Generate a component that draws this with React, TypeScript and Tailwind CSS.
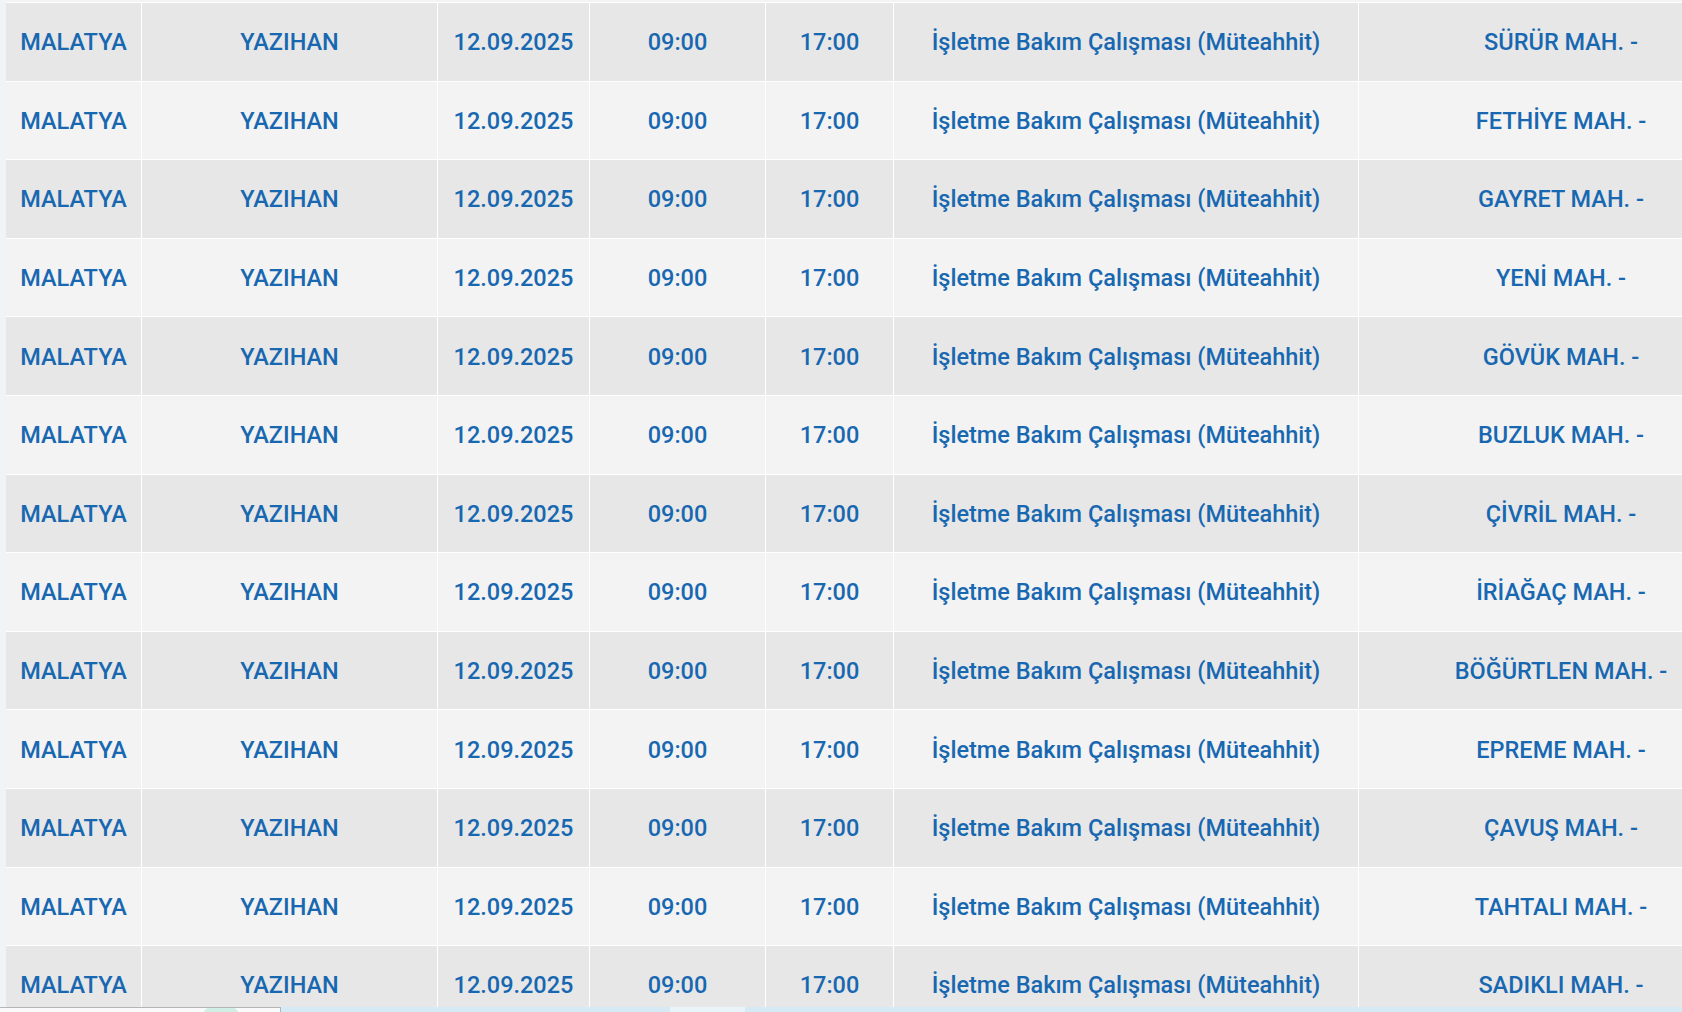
import React from "react";

const names = [
  "SÜRÜR MAH. -",
  "FETHİYE MAH. -",
  "GAYRET MAH. -",
  "YENİ MAH. -",
  "GÖVÜK MAH. -",
  "BUZLUK MAH. -",
  "ÇİVRİL MAH. -",
  "İRİAĞAÇ MAH. -",
  "BÖĞÜRTLEN MAH. -",
  "EPREME MAH. -",
  "ÇAVUŞ MAH. -",
  "TAHTALI MAH. -",
  "SADIKLI MAH. -",
];

function Row({ name, dark }: { name: string; dark: boolean }) {
  const bg = dark ? "bg-[#e7e7e7]" : "bg-[#f3f3f3]";
  const cell = "flex items-center justify-center border-r border-white shrink-0 h-full pt-[2px]";
  return (
    <div className={`flex h-[78.6px] border-b border-white ${bg}`}>
      <div className={`${cell} w-[136px]`}>MALATYA</div>
      <div className={`${cell} w-[296px]`}>YAZIHAN</div>
      <div className={`${cell} w-[152px]`}>12.09.2025</div>
      <div className={`${cell} w-[176px]`}>09:00</div>
      <div className={`${cell} w-[128px]`}>17:00</div>
      <div className={`${cell} w-[465px]`}>İşletme Bakım Çalışması (Müteahhit)</div>
      <div className={`${cell} w-[405px]`}>{name}</div>
    </div>
  );
}

export default function App() {
  return (
    <div
      className="relative w-[1682px] h-[1012px] overflow-hidden bg-[#f1f4f6] text-[#1868b1] text-[23.5px] font-medium"
      style={{ fontFamily: "Roboto, 'Noto Sans', sans-serif" }}
    >
      <div className="pl-[6px]">
        <div className="h-[3px] bg-[#f4f4f4] border-b border-white w-[1764px]" />
        <div className="w-[1764px]">
          {names.map((n, i) => (
            <Row key={i} name={n} dark={i % 2 === 0} />
          ))}
        </div>
      </div>
      <div className="absolute left-0 right-0 bottom-0 h-[5px] flex bg-[#d5eaf4]">
        <div className="w-[281px] h-full bg-[#fafafa] border-t border-r border-[#b5b5b5] flex">
          <div className="ml-[204px] w-[34px] h-[10px] rounded-full bg-[#cfeee6]" />
        </div>
        <div className="w-[389px] h-full" />
        <div className="w-[75px] h-full bg-[#eaf3f8]" />
      </div>
    </div>
  );
}
